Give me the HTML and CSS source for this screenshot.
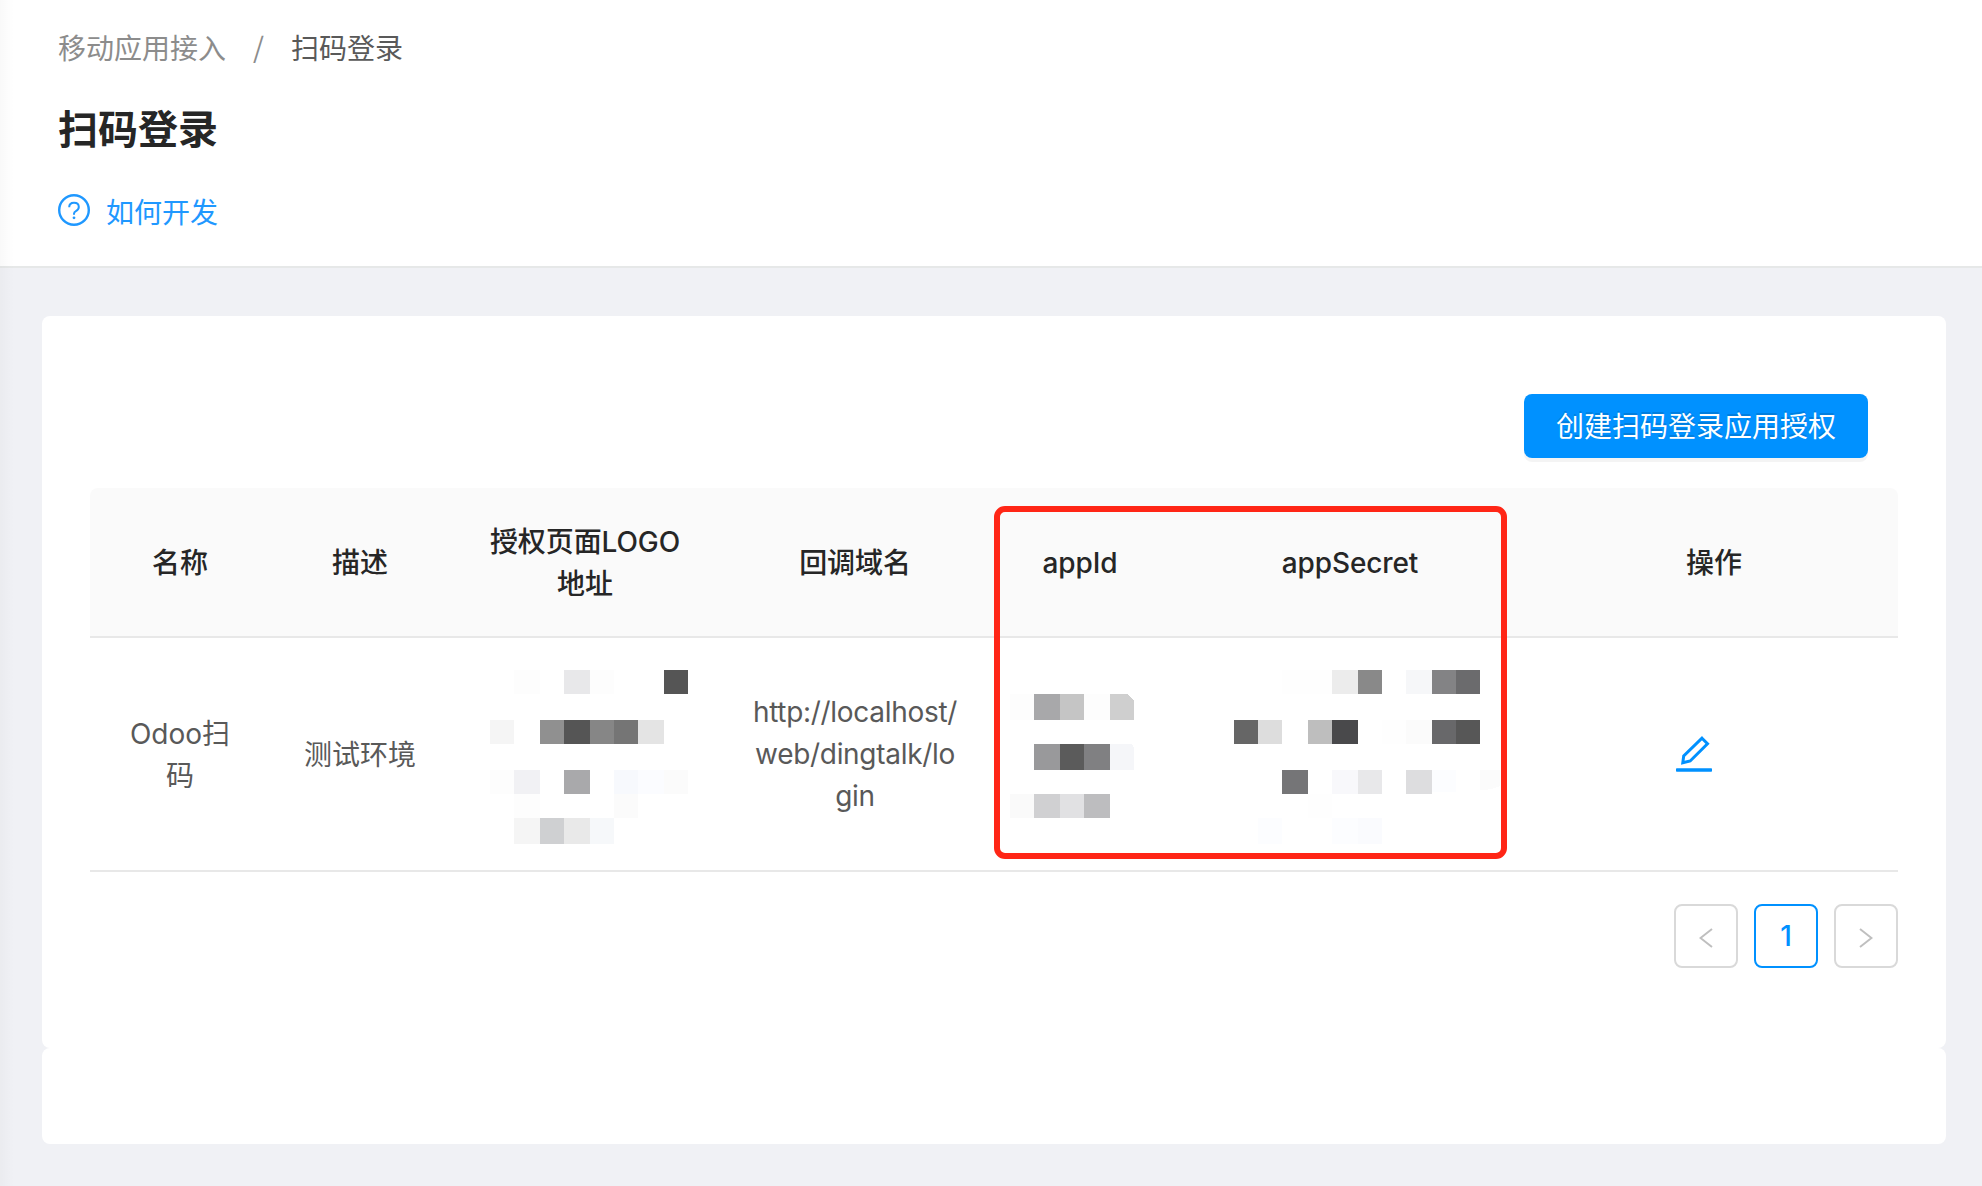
FILE: index.html
```html
<!DOCTYPE html>
<html lang="zh-CN">
<head>
<meta charset="utf-8">
<title>扫码登录</title>
<link rel="stylesheet" href="styles.css">
</head>
<body>
<div class="page">
  <header class="page-header">
    <nav class="breadcrumb">
      <a class="crumb">移动应用接入</a>
      <span class="separator">/</span>
      <span class="crumb-current">扫码登录</span>
    </nav>
    <h1 class="title">扫码登录</h1>
    <a class="help">
      <svg class="help-icon" viewBox="0 0 32 32">
        <circle cx="16" cy="16" r="14.8" fill="none" stroke="currentColor" stroke-width="2.4"/>
        <path d="M11.2 13.2C11.2 10.4 13.2 8.7 16 8.7s4.8 1.7 4.8 4.3c0 2-1.2 3.2-2.9 4.1C16.6 17.8 16 18.5 16 19.8v1" fill="none" stroke="currentColor" stroke-width="2"/>
        <circle cx="16" cy="23.8" r="1.4" fill="currentColor"/>
      </svg>
      <span>如何开发</span>
    </a>
  </header>
  <main class="content">
    <section class="card card-main">
      <div class="toolbar"><button class="primary">创建扫码登录应用授权</button></div>
      <div class="table-wrap">
        <table class="table">
          <colgroup><col class="w180"><col class="w180"><col class="w270"><col class="w270"><col class="w180"><col class="w360"><col></colgroup>
          <thead>
            <tr><th>名称</th><th>描述</th><th>授权页面LOGO<br>地址</th><th>回调域名</th><th>appId</th><th>appSecret</th><th>操作</th></tr>
          </thead>
          <tbody>
            <tr>
              <td class="label">Odoo扫<br>码</td>
              <td class="label">测试环境</td>
              <td class="masked">
                <svg class="mosaic" viewBox="450 638 270 232" shape-rendering="crispEdges">
                  <path fill="#fdfdfd" d="M514 670h26v24h-26zM590 670h24v24h-24zM490 770h24v24h-24zM514 794h26v24h-26z"/>
                  <path fill="#e8e8ea" d="M564 670h26v24h-26z"/>
                  <path fill="#555" d="M664 670h24v24h-24zM564 720h26v24h-26z"/>
                  <path fill="#f5f5f5" d="M490 720h24v24h-24zM514 818h26v26h-26z"/>
                  <path fill="#909090" d="M540 720h24v24h-24z"/>
                  <path fill="#868686" d="M590 720h24v24h-24z"/>
                  <path fill="#757575" d="M614 720h24v24h-24z"/>
                  <path fill="#e4e4e4" d="M638 720h26v24h-26z"/>
                  <path fill="#f1f1f4" d="M514 770h26v24h-26z"/>
                  <path fill="#a9a9ab" d="M564 770h26v24h-26z"/>
                  <path fill="#f7f9fd" d="M614 770h24v24h-24z"/>
                  <path fill="#fbfcff" d="M638 770h26v24h-26z"/>
                  <path fill="#fbfbfb" d="M664 770h24v24h-24zM614 794h24v24h-24z"/>
                  <path fill="#cfd0d2" d="M540 818h24v26h-24z"/>
                  <path fill="#e9e9e9" d="M564 818h26v26h-26z"/>
                  <path fill="#f6f8fa" d="M590 818h24v26h-24z"/>
                </svg>
              </td>
              <td class="url">http://localhost/<br>web/dingtalk/lo<br>gin</td>
              <td class="masked">
                <svg class="mosaic" viewBox="990 638 180 232" shape-rendering="crispEdges">
                  <path fill="#fdfdfd" d="M1010 694h24v26h-24zM1084 694h26v26h-26z"/>
                  <path fill="#a8a8aa" d="M1034 694h26v26h-26z"/>
                  <path fill="#c5c5c5" d="M1060 694h24v26h-24z"/>
                  <path fill="#cfcfcf" d="M1110 694h18l6 7v19h-24z"/>
                  <path fill="#99999b" d="M1034 744h26v26h-26z"/>
                  <path fill="#5b5b5b" d="M1060 744h24v26h-24z"/>
                  <path fill="#808082" d="M1084 744h26v26h-26z"/>
                  <path fill="#f5f6f9" d="M1110 744h22l2 4v22h-24z"/>
                  <path fill="#fafafa" d="M1010 794h24v24h-24z"/>
                  <path fill="#d0d0d2" d="M1034 794h26v24h-26z"/>
                  <path fill="#e1e1e3" d="M1060 794h24v24h-24z"/>
                  <path fill="#bdbdbf" d="M1084 794h26v24h-26z"/>
                </svg>
              </td>
              <td class="masked">
                <svg class="mosaic" viewBox="1170 638 360 232" shape-rendering="crispEdges">
                  <path fill="#fefefe" d="M1282 670h50v24h-50zM1382 720h24v24h-24zM1308 794h24v24h-24z"/>
                  <path fill="#ececec" d="M1332 670h26v24h-26z"/>
                  <path fill="#898989" d="M1358 670h24v24h-24z"/>
                  <path fill="#f6f7f9" d="M1406 670h26v24h-26z"/>
                  <path fill="#838385" d="M1432 670h24v24h-24z"/>
                  <path fill="#6b6b6d" d="M1456 670h24v24h-24z"/>
                  <path fill="#666" d="M1234 720h24v24h-24z"/>
                  <path fill="#ddd" d="M1258 720h24v24h-24z"/>
                  <path fill="#bebebe" d="M1308 720h24v24h-24z"/>
                  <path fill="#49494b" d="M1332 720h26v24h-26z"/>
                  <path fill="#fbfbfb" d="M1406 720h26v24h-26zM1480 770h20v16q-8 4-20 4z"/>
                  <path fill="#68686a" d="M1432 720h24v24h-24z"/>
                  <path fill="#575757" d="M1456 720h24v24h-24z"/>
                  <path fill="#757577" d="M1282 770h26v24h-26z"/>
                  <path fill="#f8f8fb" d="M1332 770h26v24h-26z"/>
                  <path fill="#e8e8ea" d="M1358 770h24v24h-24z"/>
                  <path fill="#dddddf" d="M1406 770h26v24h-26z"/>
                  <path fill="#fcfdff" d="M1432 770h24v22h-24zM1258 818h24v26h-24zM1332 818h26v26h-26z"/>
                  <path fill="#fafbfe" d="M1358 818h24v26h-24z"/>
                </svg>
              </td>
              <td class="actions">
                <svg class="edit-icon" viewBox="0 0 36 36">
                  <path d="M26 2.2L31.5 7.7 14.2 25 6.8 26.8 7.7 19.9z" fill="none" stroke="currentColor" stroke-width="3"/>
                  <rect y="32.2" width="36" height="3.6" rx=".8" fill="currentColor"/>
                </svg>
              </td>
            </tr>
          </tbody>
        </table>
        <div class="highlight"></div>
      </div>
      <div class="pagination">
        <span class="page-btn"><svg class="arrow" viewBox="0 0 14 20"><path d="M13 1L1.5 10 13 19" fill="none" stroke="currentColor" stroke-width="2"/></svg></span>
        <span class="page-btn active">1</span>
        <span class="page-btn"><svg class="arrow" viewBox="0 0 14 20"><path d="M1 1l11.5 9L1 19" fill="none" stroke="currentColor" stroke-width="2"/></svg></span>
      </div>
    </section>
    <section class="card card-footer"></section>
  </main>
  <div class="edge-shadow"></div>
</div>
</body>
</html>
```
FILE: styles.css
```css
* { box-sizing: border-box; }
body {
  margin: 0;
  background: #f0f1f5;
  color: #595959;
  font: 28px/42px Inter, "Noto Sans CJK SC", sans-serif;
}
.page { position: relative; height: 1186px; overflow: hidden; }
.page-header {
  height: 268px;
  padding: 28px 58px 0;
  background: #fff;
  border-bottom: 2px solid #e6e8e8;
}
.breadcrumb { display: flex; height: 42px; }
.crumb, .separator { color: #8c8c8c; }
.separator { width: 65px; text-align: center; line-height: 36px; font-family: "Noto Sans CJK SC", sans-serif; }
.title {
  margin: 30px 0 0;
  height: 60px;
  font-size: 40px;
  line-height: 60px;
  font-weight: 600;
  color: #262626;
}
.help { display: flex; align-items: center; gap: 16px; margin-top: 32px; height: 42px; color: #1f98ff; }
.help-icon { width: 32px; height: 32px; margin-bottom: 6px; }
.content { padding: 48px 36px 0 42px; }
.card { background: #fff; border-radius: 8px; }
.card-main { height: 732px; padding: 78px 48px 0; }
.card-footer { height: 96px; }
.toolbar { display: flex; justify-content: flex-end; padding-right: 30px; }
.primary {
  width: 344px;
  height: 64px;
  padding: 1px 0 0;
  border: 0;
  border-radius: 8px;
  background: #0091ff;
  color: #fff;
  font: inherit;
  text-shadow: 0 -2px 0 rgba(0, 0, 0, .12);
  box-shadow: 0 4px 0 rgba(0, 0, 0, .045);
}
.table-wrap { position: relative; margin-top: 30px; }
.table { width: 1808px; table-layout: fixed; border-collapse: separate; border-spacing: 0; text-align: center; }
.w180 { width: 180px; }
.w270 { width: 270px; }
.w360 { width: 360px; }
th, td { padding: 0; vertical-align: middle; border-bottom: 2px solid #e8e8e8; }
th { height: 150px; padding-top: 2px; background: #fafafa; color: #262626; font-weight: 500; letter-spacing: -.1px; }
th:first-child { border-top-left-radius: 8px; }
th:last-child { border-top-right-radius: 8px; }
td { height: 234px; }
.label { padding-top: 2px; }
.url { letter-spacing: -.3px; }
.actions { padding-bottom: 4px; }
.mosaic { display: block; width: 100%; height: 232px; }
.edit-icon { display: inline-block; width: 36px; height: 36px; margin-right: 40px; vertical-align: middle; color: #0091ff; }
.highlight {
  position: absolute;
  left: 904px;
  top: 18px;
  width: 513px;
  height: 353px;
  border: 6px solid #ff2616;
  border-radius: 11px;
}
.pagination { display: flex; justify-content: flex-end; gap: 16px; margin-top: 32px; }
.page-btn {
  display: flex;
  align-items: center;
  justify-content: center;
  width: 64px;
  height: 64px;
  border: 2px solid #d9d9d9;
  border-radius: 8px;
  color: #bfbfbf;
}
.active { border-color: #0091ff; color: #0091ff; font-weight: 500; }
.arrow { width: 14px; height: 20px; margin-top: 4px; }
.edge-shadow {
  position: absolute;
  inset: 0 auto 0 0;
  width: 14px;
  background: linear-gradient(90deg, rgba(0, 0, 0, .025), transparent);
}
```
